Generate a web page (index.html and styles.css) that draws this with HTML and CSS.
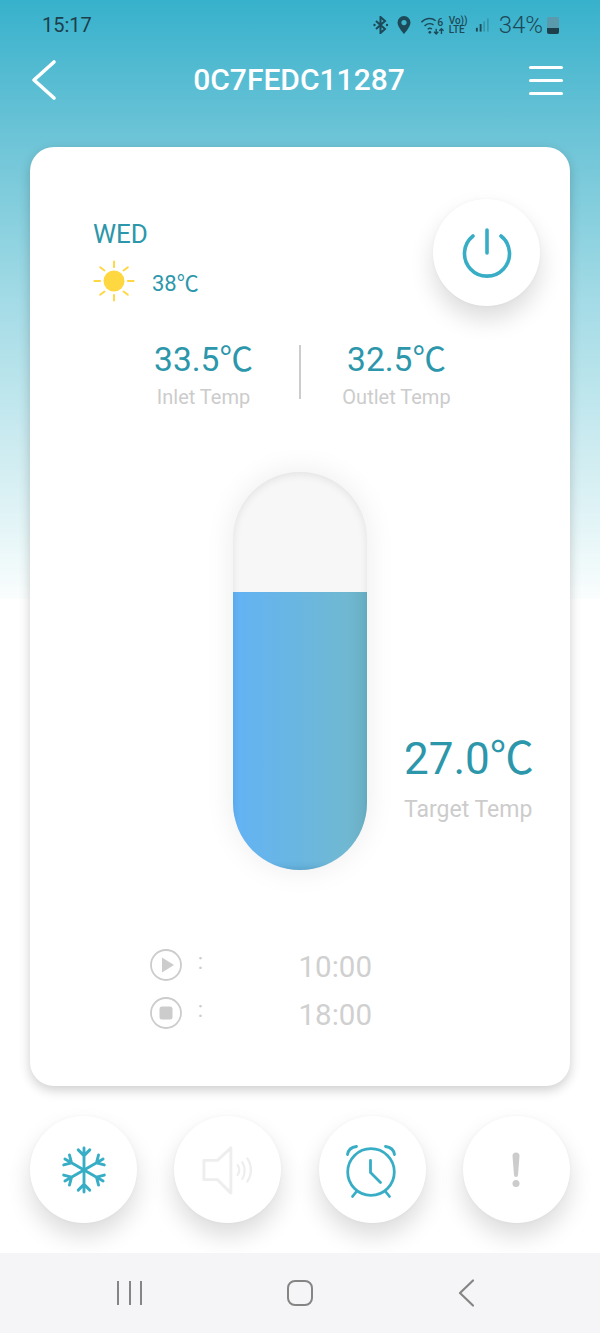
FILE: index.html
```html
<!DOCTYPE html>
<html lang="en">
<head>
<meta charset="utf-8">
<title>0C7FEDC11287</title>
<link rel="stylesheet" href="styles.css">
</head>
<body>
<div class="screen">
  <div class="status">
    <span class="clock">15:17</span>
    <div class="status-right">
      <svg class="ic-bt" viewBox="0 0 16 18"><path d="M3 5l9 8-4.500 4V1L12 5l-9 8" fill="none" stroke="#1d4a58" stroke-width="2"/><circle cx="1.500" cy="9" r="1.200" fill="#1d4a58"/><circle cx="14" cy="9" r="1.200" fill="#1d4a58"/></svg>
      <svg class="ic-pin" viewBox="0 0 14 18"><path fill-rule="evenodd" d="M7 0a6.500 6.500 0 0 1 6.500 6.500C13.500 11 7 18 7 18S.5 11 .5 6.500A6.500 6.500 0 0 1 7 0zm0 4a2.600 2.600 0 1 0 0 5.200A2.600 2.600 0 0 0 7 4z" fill="#1d4a58"/></svg>
      <svg class="ic-wifi" viewBox="0 0 24 18"><g fill="none" stroke="#1d4a58" stroke-width="1.400"><path d="M1 6c4-4.500 10-4.500 13.500-1.500"/><path d="M4 9.500c2.500-2.700 6-2.800 8.500-1"/><path d="M7 12.500c1.200-1.100 2.800-1.100 4-.2"/></g><circle cx="9" cy="15.500" r="1.300" fill="#1d4a58"/><path d="M15 12v5m-2-2l2 2 2-2M20 17v-5m-2 2l2-2 2 2" fill="none" stroke="#1d4a58" stroke-width="1.300"/><text x="16" y="9" class="wifi-six">6</text></svg>
      <span class="volte"><span>Vo))</span><span>LTE</span></span>
      <svg class="ic-signal" viewBox="0 0 16 16"><g fill="#1d4a58"><rect x="1" y="11" width="2" height="4"/><rect x="5" y="7" width="2" height="8"/></g><g fill="#1d4a58" opacity=".35"><rect x="9" y="4" width="1.500" height="11"/><rect x="13" y="1" width="1.500" height="14"/></g></svg>
      <span class="battery-text">34%</span>
      <span class="battery"><span class="battery-level"></span></span>
    </div>
  </div>

  <header class="appbar">
    <svg class="back" viewBox="0 0 27 42"><path d="M24 3L4 21l20 18" fill="none" stroke="#fff" stroke-width="3.600" stroke-linecap="round" stroke-linejoin="round"/></svg>
    <h1 class="title">0C7FEDC11287</h1>
    <div class="menu"><span></span><span></span><span></span></div>
  </header>

  <main class="card">
    <section class="top">
      <div class="weather">
        <div class="day">WED</div>
        <div class="today">
          <svg class="sun" viewBox="0 0 44 44"><circle cx="22" cy="22" r="11" fill="#ffd740"/><g stroke="#ffd740" stroke-width="2" stroke-linecap="round"><path d="M22 1.500v6M22 36.500v6M1.500 22h6M36.500 22h6M7.500 7.500l4.500 3.500M36.500 7.500L32 11M7.500 36.500L12 33M36.500 36.500L32 33"/></g></svg>
          <span class="today-temp">38℃</span>
        </div>
      </div>
      <button class="round power" aria-label="Power">
        <svg viewBox="0 0 50 50"><path d="M11 8A22.500 22.500 0 1 0 39 8" fill="none" stroke="#38adc6" stroke-width="3.600" stroke-linecap="round"/><path d="M25 2v23" stroke="#38adc6" stroke-width="3.600" stroke-linecap="round"/></svg>
      </button>
    </section>

    <section class="temps">
      <div class="temp"><div class="temp-value">33.5℃</div><div class="temp-label">Inlet Temp</div></div>
      <div class="divider"></div>
      <div class="temp"><div class="temp-value">32.5℃</div><div class="temp-label">Outlet Temp</div></div>
    </section>

    <section class="thermo">
      <div class="pill"><div class="pill-fill"></div></div>
      <div class="target">
        <div class="target-value">27.0℃</div>
        <div class="target-label">Target Temp</div>
      </div>
    </section>

    <section class="schedule">
      <svg class="sch-icon" viewBox="0 0 32 32"><circle cx="16" cy="16" r="15" fill="none" stroke="#ccc" stroke-width="1.800"/><path d="M12 8.500L24 16l-12 7.500z" fill="#ccc"/></svg>
      <span class="colon">:</span>
      <span class="sch-time">10:00</span>
      <svg class="sch-icon" viewBox="0 0 32 32"><circle cx="16" cy="16" r="15" fill="none" stroke="#ccc" stroke-width="1.800"/><rect x="9.500" y="9.500" width="13" height="13" rx="2.500" fill="#ccc"/></svg>
      <span class="colon">:</span>
      <span class="sch-time">18:00</span>
    </section>
  </main>

  <section class="actions">
    <button class="round" aria-label="Mode">
      <svg class="ic-snow" viewBox="0 0 48 50">
        <defs><g id="arm"><path d="M24 25V2M24 10l-6-6M24 10l6-6" fill="none" stroke="#38adc6" stroke-width="3" stroke-linecap="round"/></g></defs>
        <use href="#arm"/><use href="#arm" transform="rotate(60 24 25)"/><use href="#arm" transform="rotate(120 24 25)"/><use href="#arm" transform="rotate(180 24 25)"/><use href="#arm" transform="rotate(240 24 25)"/><use href="#arm" transform="rotate(300 24 25)"/>
      </svg>
    </button>
    <button class="round" aria-label="Sound">
      <svg class="ic-sound" viewBox="0 0 54 50"><g fill="none" stroke="#eee" stroke-width="3" stroke-linejoin="round" stroke-linecap="round"><path d="M2 15h14L30 2v47L16 35H2z"/><path d="M37 20c2 3 2 7 0 10M42 17c3 5 3 12 0 17M47 13c5 7 5 17 0 24" stroke-width="2.400"/></g></svg>
    </button>
    <button class="round" aria-label="Alarm">
      <svg class="ic-alarm" viewBox="0 0 54 58"><g fill="none" stroke="#38adc6" stroke-width="2.800" stroke-linecap="round" stroke-linejoin="round"><circle cx="26" cy="31" r="23.300"/><path d="M25.500 19.500v12l10 10M2.500 13.500Q3.500 6.500 11.500 5.500M49.500 13.500Q48.500 6.500 40.500 5.500M11.500 50.500l-4 5M40.500 50.500l4 5"/></g></svg>
    </button>
    <button class="round" aria-label="Alerts">
      <svg class="ic-warn" viewBox="0 0 10 36"><path d="M1.500 4a3.500 3.500 0 0 1 7 0L7 23a2 2 0 0 1-4 0z" fill="#ccc"/><circle cx="5" cy="31.500" r="3.500" fill="#ccc"/></svg>
    </button>
  </section>

  <nav class="navbar">
    <div class="nav-recent"><span></span><span></span><span></span></div>
    <div class="nav-home"></div>
    <svg class="nav-back" viewBox="0 0 16 28"><path d="M15 1.500L2 14l13 12.500" fill="none" stroke="#858585" stroke-width="2.200" stroke-linecap="round" stroke-linejoin="round"/></svg>
  </nav>
</div>
</body>
</html>
```
FILE: styles.css
```css
* { box-sizing: border-box; margin: 0; padding: 0; }
html, body { width: 600px; height: 1333px; overflow: hidden; background: #fff; }
body { font-family: Roboto, "Noto Sans CJK SC", "Liberation Sans", sans-serif; }
svg { display: block; }

.screen {
  width: 600px;
  height: 1333px;
  display: flex;
  flex-direction: column;
  background: linear-gradient(180deg, #37b1cc 0, #6ac3d6 130px, #a3dbe6 300px, #d6eff3 480px, #eef9fa 560px, #fafdfd 598px, #fff 600px);
  background-size: 100% 600px;
  background-repeat: no-repeat;
  background-color: #fff;
}

.status { height: 50px; display: flex; align-items: center; justify-content: space-between; padding: 0 41px 0 42px; color: #1d3f4c; }
.clock { font-size: 20px; }
.status-right { display: flex; align-items: center; }
.ic-bt { width: 16px; height: 18px; margin-right: 8px; }
.ic-pin { width: 14px; height: 18px; margin-right: 9px; }
.ic-wifi { width: 26px; height: 19px; margin-right: 3px; }
.wifi-six { font: 500 10px Roboto, sans-serif; fill: #1d4a58; }
.volte { display: flex; flex-direction: column; font-size: 10px; font-weight: 500; line-height: 9px; margin-right: 7px; color: #1d4a58; }
.ic-signal { width: 15px; height: 16px; margin-right: 9px; }
.battery-text { font-size: 24px; font-weight: 300; color: #1d4a58; }
.battery { width: 12px; height: 17px; margin-left: 4px; border-radius: 2px; background: #5a9aac; display: flex; align-items: flex-end; overflow: hidden; }
.battery-level { display: block; width: 100%; height: 6px; background: #1d3f4c; }

.appbar { height: 60px; display: flex; align-items: center; justify-content: space-between; padding: 0 37px 0 30px; color: #fff; }
.back { width: 27px; height: 42px; }
.title { font-size: 30px; font-weight: 500; line-height: 60px; margin-left: 12px; }
.menu { width: 34px; display: flex; flex-direction: column; gap: 10px; }
.menu span { display: block; height: 3px; background: #fff; border-radius: 2px; }

.card {
  height: 939px;
  margin: 37px 30px 0;
  background: #fff;
  border-radius: 24px;
  box-shadow: 0 4px 12px rgba(0,0,0,.2);
  display: flex;
  flex-direction: column;
}

.top { display: flex; justify-content: space-between; padding: 52px 30px 0 63px; }
.weather { padding-top: 20px; }
.day { font-size: 26px; line-height: 30px; color: #2c97ab; }
.today { display: flex; align-items: center; margin-top: 11px; }
.sun { width: 42px; height: 42px; margin-right: 17px; }
.today-temp { font-size: 22px; color: #2c97ab; padding-bottom: 1px; }

.round {
  width: 107px;
  height: 107px;
  border: 0;
  border-radius: 50%;
  background: #fff;
  box-shadow: 0 13px 24px rgba(0,0,0,.14), 0 0 4px rgba(0,0,0,.03);
  display: flex;
  align-items: center;
  justify-content: center;
  flex: none;
}
.power svg { width: 50px; height: 50px; }

.temps { display: flex; justify-content: center; align-items: flex-start; margin-top: 34px; }
.temp { width: 191px; text-align: center; }
.temp-value { font-size: 33.500px; line-height: 40px; color: #2c97ab; }
.temp-label { font-size: 20px; line-height: 24px; margin-top: 5px; color: #ccc; }
.divider { width: 2px; height: 54px; margin-top: 5px; background: #ccc; }

.thermo { display: grid; grid-template-columns: 1fr 134px 1fr; margin-top: 63px; }
.pill {
  grid-column: 2;
  height: 398px;
  border-radius: 67px;
  background: #f7f7f7;
  box-shadow: 0 0 30px rgba(0,0,0,.08), inset 0 2px 8px rgba(0,0,0,.09);
  overflow: hidden;
  display: flex;
  flex-direction: column;
  justify-content: flex-end;
}
.pill-fill {
  height: 278px;
  background: linear-gradient(90deg, #5fb0f3 0, #64b3f2 6%, #68b6e4 40%, #70b8d2 85%, #68aec2 100%);
  box-shadow: inset 0 -4px 6px -2px rgba(30,90,130,.25);
}
.target { grid-column: 3; align-self: end; padding: 0 0 46px 37px; }
.target-value { font-size: 44px; line-height: 52px; color: #2c97ab; white-space: nowrap; }
.target-label { font-size: 23px; line-height: 28px; margin-top: 11px; color: #ccc; white-space: nowrap; }

.schedule { display: grid; grid-template-columns: 32px 40px 160px; grid-auto-rows: 48px; align-items: center; margin: 71px 0 0 120px; }
.sch-icon { width: 32px; height: 32px; }
.colon { font-size: 22px; color: #ccc; text-align: center; padding-bottom: 8px; margin-left: -3px; }
.sch-time { font-size: 29.500px; color: #d0d0d0; text-align: right; padding: 3px 10px 0 0; }

.actions { display: flex; justify-content: space-between; padding: 0 30px; margin-top: 30px; }
.ic-snow { width: 46px; height: 48px; }
.ic-sound { width: 52px; height: 50px; }
.ic-alarm { width: 54px; height: 58px; }
.ic-warn { width: 10px; height: 36px; }

.navbar { height: 80px; margin-top: 30px; background: #f5f5f7; display: flex; align-items: center; justify-content: space-between; padding: 0 126px 0 117px; }
.nav-recent { width: 25px; display: flex; justify-content: space-between; }
.nav-recent span { display: block; width: 2px; height: 24px; background: #858585; }
.nav-home { width: 26px; height: 26px; border: 2px solid #858585; border-radius: 8px; }
.nav-back { width: 16px; height: 28px; }
```
